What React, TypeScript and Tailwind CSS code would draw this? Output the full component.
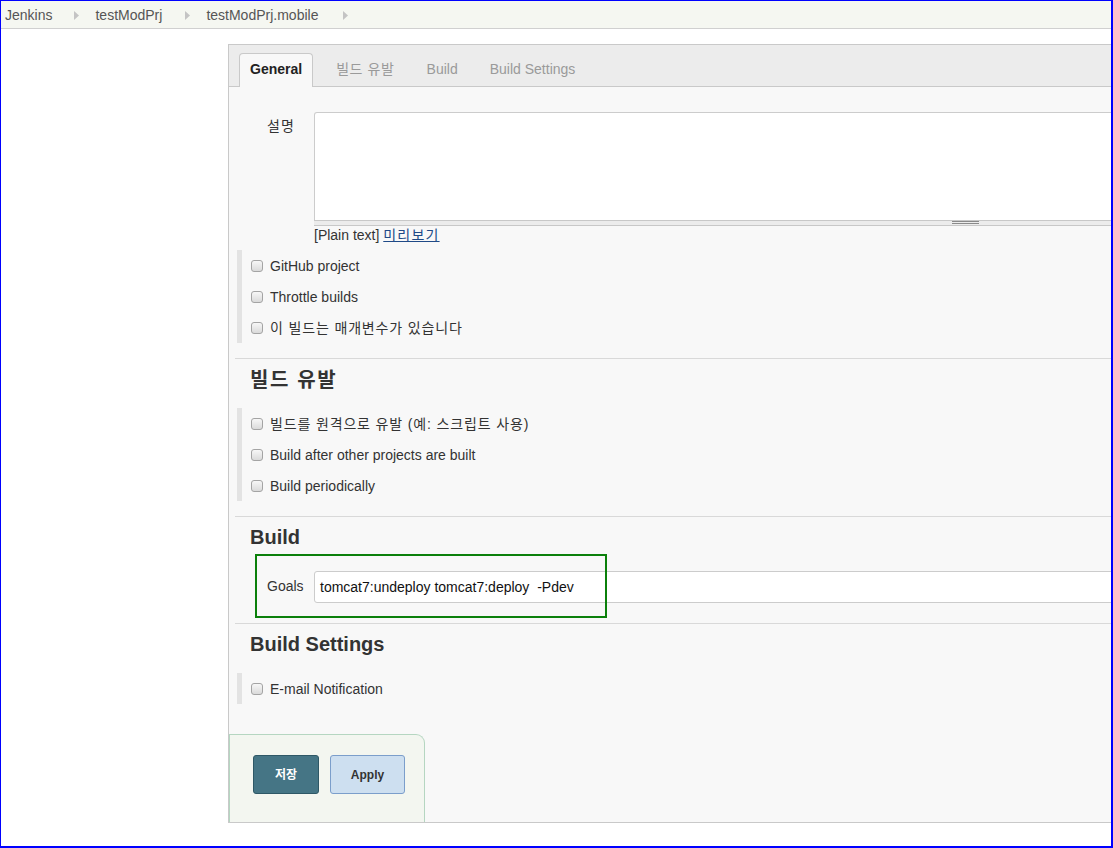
import React from "react";

const FONT = "font-['Liberation_Sans','Noto_Sans_CJK_KR',Arial,sans-serif]";

const Checkbox = () => (
  <span className="inline-block w-[12px] h-[12px] shrink-0 rounded-[3px] border border-[#a4a4a4] bg-[linear-gradient(#f7f7f7,#dadada)] mt-[-2px]" />
);

const CheckRow = ({ label, ko }: { label: string; ko?: boolean }) => (
  <div className="h-[31px] flex items-center pl-[9px] pt-[2px]">
    <Checkbox />
    <span className={`ml-[7px] text-[14px] text-[#333] ${ko ? "tracking-[0.85px]" : ""}`}>{label}</span>
  </div>
);

const Group = ({ items, className = "" }: { items: { t: string; ko?: boolean }[]; className?: string }) => (
  <div className={`border-l-[5px] border-[#e3e3e3] ${className}`}>
    {items.map((it) => (
      <CheckRow key={it.t} label={it.t} ko={it.ko} />
    ))}
  </div>
);

const Arrow = () => (
  <svg width="5" height="9" viewBox="0 0 5 9" className="shrink-0">
    <path d="M0 0 L5 4.5 L0 9 Z" fill="#c4c4c4" />
  </svg>
);

export default function App() {
  return (
    <div
      className={`${FONT} w-[1113px] h-[848px] overflow-hidden bg-white border-t border-l border-r-2 border-b-2 border-[#0000ff] flex flex-col`}
    >
      {/* Breadcrumb */}
      <div className="h-[28px] shrink-0 bg-[#f5f7f1] border-b border-[#d0d0d0] flex items-center pl-[4px] text-[14px] text-[#555] pt-[1px]">
        <span>Jenkins</span>
        <span className="ml-[22px] mr-[16px] flex items-center"><Arrow /></span>
        <span>testModPrj</span>
        <span className="ml-[23px] mr-[16px] flex items-center"><Arrow /></span>
        <span>testModPrj.mobile</span>
        <span className="ml-[25px] flex items-center"><Arrow /></span>
      </div>

      <div className="flex mt-[15px]">
        <div className="w-[227px] shrink-0" />
        {/* Panel */}
        <div className="w-[1000px] shrink-0 border-l border-t border-b border-[#c9c9c9] bg-[#f8f8f8] flex flex-col">
          {/* Tab bar */}
          <div className="h-[42px] bg-[#ececec] border-b border-[#c9c9c9] flex items-end pl-[10px] text-[14px]">
            <div className="h-[34px] mb-[-1px] px-[10px] pb-[2px] flex items-center border border-b-0 border-[#c9c9c9] rounded-t-[4px] bg-[#f8f8f8] font-bold text-[#222]">
              General
            </div>
            <div className="h-[33px] ml-[7px] px-[16px] flex items-center text-[#9a9a9a] tracking-[0.6px]">빌드 유발</div>
            <div className="h-[33px] px-[16px] flex items-center text-[#9a9a9a]">Build</div>
            <div className="h-[33px] px-[16px] flex items-center text-[#9a9a9a]">Build Settings</div>
          </div>

          {/* Description */}
          <div className="flex mt-[25px]">
            <div className="w-[85px] shrink-0 pl-[38px] pt-[4px] text-[14px] text-[#333] leading-[20px] tracking-[1px]">설명</div>
            <div className="flex-1 flex flex-col">
              <div className="h-[108px] bg-white border border-[#cccccc] border-b-0 rounded-tl-[3px]" />
              <div className="h-[6px] border-t border-b border-[#c8c8c8] bg-[#ececec] relative">
                <div className="absolute left-[638px] top-[0px] w-[27px] h-[1px] bg-[#8a8a8a]" />
                <div className="absolute left-[638px] top-[2px] w-[27px] h-[1px] bg-[#8a8a8a]" />
              </div>
              <div className="h-[18px] leading-[18px] text-[14px] text-[#333]">
                [Plain text] <span className="text-[#204a87] underline tracking-[1.2px]">미리보기</span>
              </div>
            </div>
          </div>

          <Group
            className="mt-[6px] ml-[8px]"
            items={[{ t: "GitHub project" }, { t: "Throttle builds" }, { t: "이 빌드는 매개변수가 있습니다", ko: true }]}
          />

          {/* 빌드 유발 */}
          <div className="mt-[15px] ml-[6px] border-t border-[#d9d9d9]">
            <div className="pt-[9px] pl-[15px] h-[33px] leading-[24px] text-[20px] font-bold text-[#333] tracking-[1.6px]">빌드 유발</div>
            <Group
              className="mt-[16px] ml-[2px]"
              items={[
                { t: "빌드를 원격으로 유발 (예: 스크립트 사용)", ko: true },
                { t: "Build after other projects are built" },
                { t: "Build periodically" },
              ]}
            />
          </div>

          {/* Build */}
          <div className="mt-[15px] ml-[6px] border-t border-[#d9d9d9] relative">
            <div className="pt-[8px] pl-[15px] h-[32px] leading-[24px] text-[20px] font-bold text-[#333]">Build</div>
            <div className="flex mt-[22px] mb-[20px]">
              <div className="w-[79px] shrink-0 pl-[32px] flex items-center text-[14px] text-[#333] pb-[2px]">Goals</div>
              <div className="flex-1 h-[32px] bg-white border border-[#cccccc] rounded-l-[3px] flex items-center pl-[5px] text-[14px] text-[#111] whitespace-pre">
                tomcat7:undeploy tomcat7:deploy  -Pdev
              </div>
            </div>
            <div className="absolute left-[20px] top-[37px] w-[352px] h-[64px] border-2 border-[#0b800b]" />
          </div>

          {/* Build Settings */}
          <div className="ml-[6px] border-t border-[#d9d9d9]">
            <div className="pt-[8px] pl-[15px] h-[32px] leading-[24px] text-[20px] font-bold text-[#333]">Build Settings</div>
            <Group className="mt-[17px] ml-[2px]" items={[{ t: "E-mail Notification" }]} />
          </div>

          {/* Buttons */}
          <div className="mt-[30px] w-[196px] h-[88px] border border-b-0 border-[#b5d6c1] rounded-tr-[9px] bg-[#f3f6f0] flex items-start pl-[23px] pt-[20px]">
            <div className="w-[66px] h-[39px] rounded-[3px] border border-[#2e5866] bg-[#457585] flex items-center justify-center text-[12px] font-bold text-white">
              저장
            </div>
            <div className="ml-[11px] w-[75px] h-[39px] rounded-[3px] border border-[#7b9ecb] bg-[#cddff0] flex items-center justify-center text-[12px] font-bold text-[#333]">
              Apply
            </div>
          </div>
        </div>
      </div>
    </div>
  );
}
